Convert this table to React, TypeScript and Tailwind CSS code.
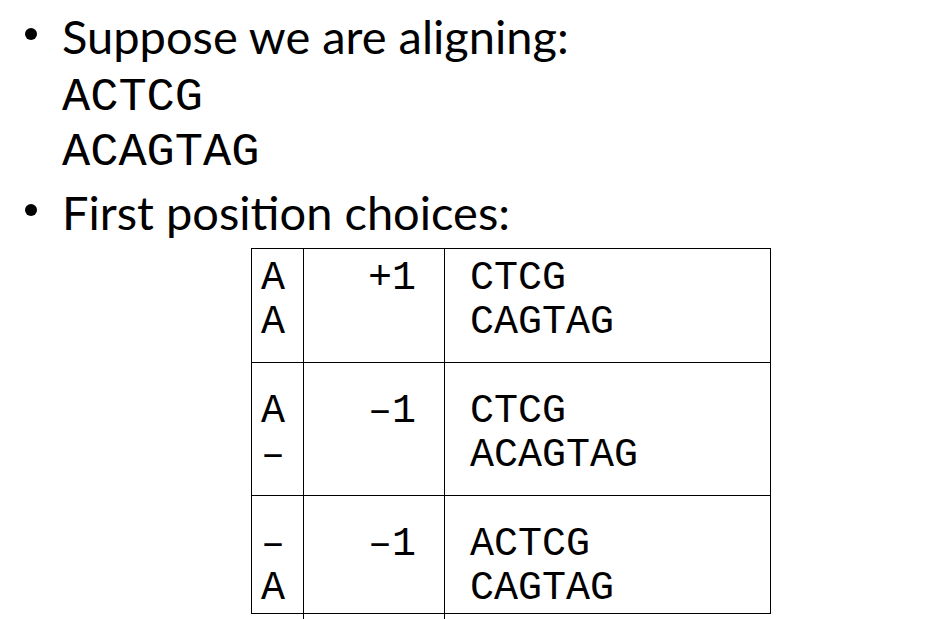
import React from "react";

const ROWS = [
  { left: ["A", "A"], score: "+1", right: ["CTCG", "CAGTAG"], pad: "pt-[8px]", h: "h-[113px]" },
  { left: ["A", "–"], score: "–1", right: ["CTCG", "ACAGTAG"], pad: "pt-[27px]", h: "h-[133px] border-t" },
  { left: ["–", "A"], score: "–1", right: ["ACTCG", "CAGTAG"], pad: "pt-[27px]", h: "h-[118px] border-t" },
];

function Bullet({ children }: { children: React.ReactNode }) {
  return (
    <div className="flex items-start h-[55px] leading-[55px] text-[47px] font-['Lato',sans-serif] text-black">
      <span className="w-[25px]" />
      <span className="mt-[19px] w-[12px] h-[12px] rounded-full bg-black" />
      <span className="ml-[25px] whitespace-nowrap">{children}</span>
    </div>
  );
}

export default function App() {
  return (
    <div className="w-[948px] h-[619px] overflow-hidden bg-white text-black">
      <div className="pt-[9px]">
        <Bullet>Suppose we are aligning:</Bullet>
        <div className="mt-[6px] pl-[62px] font-['Liberation_Mono',monospace] text-[47px] leading-[55px]">
          <div>ACTCG</div>
          <div>ACAGTAG</div>
        </div>
        <div className="mt-[5px]">
          <Bullet>First position choices:</Bullet>
        </div>
      </div>

      {/* alignment table */}
      <div className="ml-[251px] mt-[8px] w-[520px] border border-black font-['Liberation_Mono',monospace] text-[40px] leading-[44px]">
        {ROWS.map((r, i) => (
          <div key={i} className={`flex border-black ${r.h}`}>
            <div className={`w-[51px] pl-[9px] ${r.pad}`}>
              <div>{r.left[0]}</div>
              <div>{r.left[1]}</div>
            </div>
            <div className={`w-[141px] border-l border-black pl-[64px] ${r.pad}`}>
              {r.score}
            </div>
            <div className={`flex-1 border-l border-black pl-[25px] ${r.pad}`}>
              <div>{r.right[0]}</div>
              <div>{r.right[1]}</div>
            </div>
          </div>
        ))}
      </div>
      <div className="ml-[251px] flex h-[10px]">
        <div className="w-[52px]" />
        <div className="w-[141px] border-l border-black" />
        <div className="border-l border-black" />
      </div>
    </div>
  );
}
